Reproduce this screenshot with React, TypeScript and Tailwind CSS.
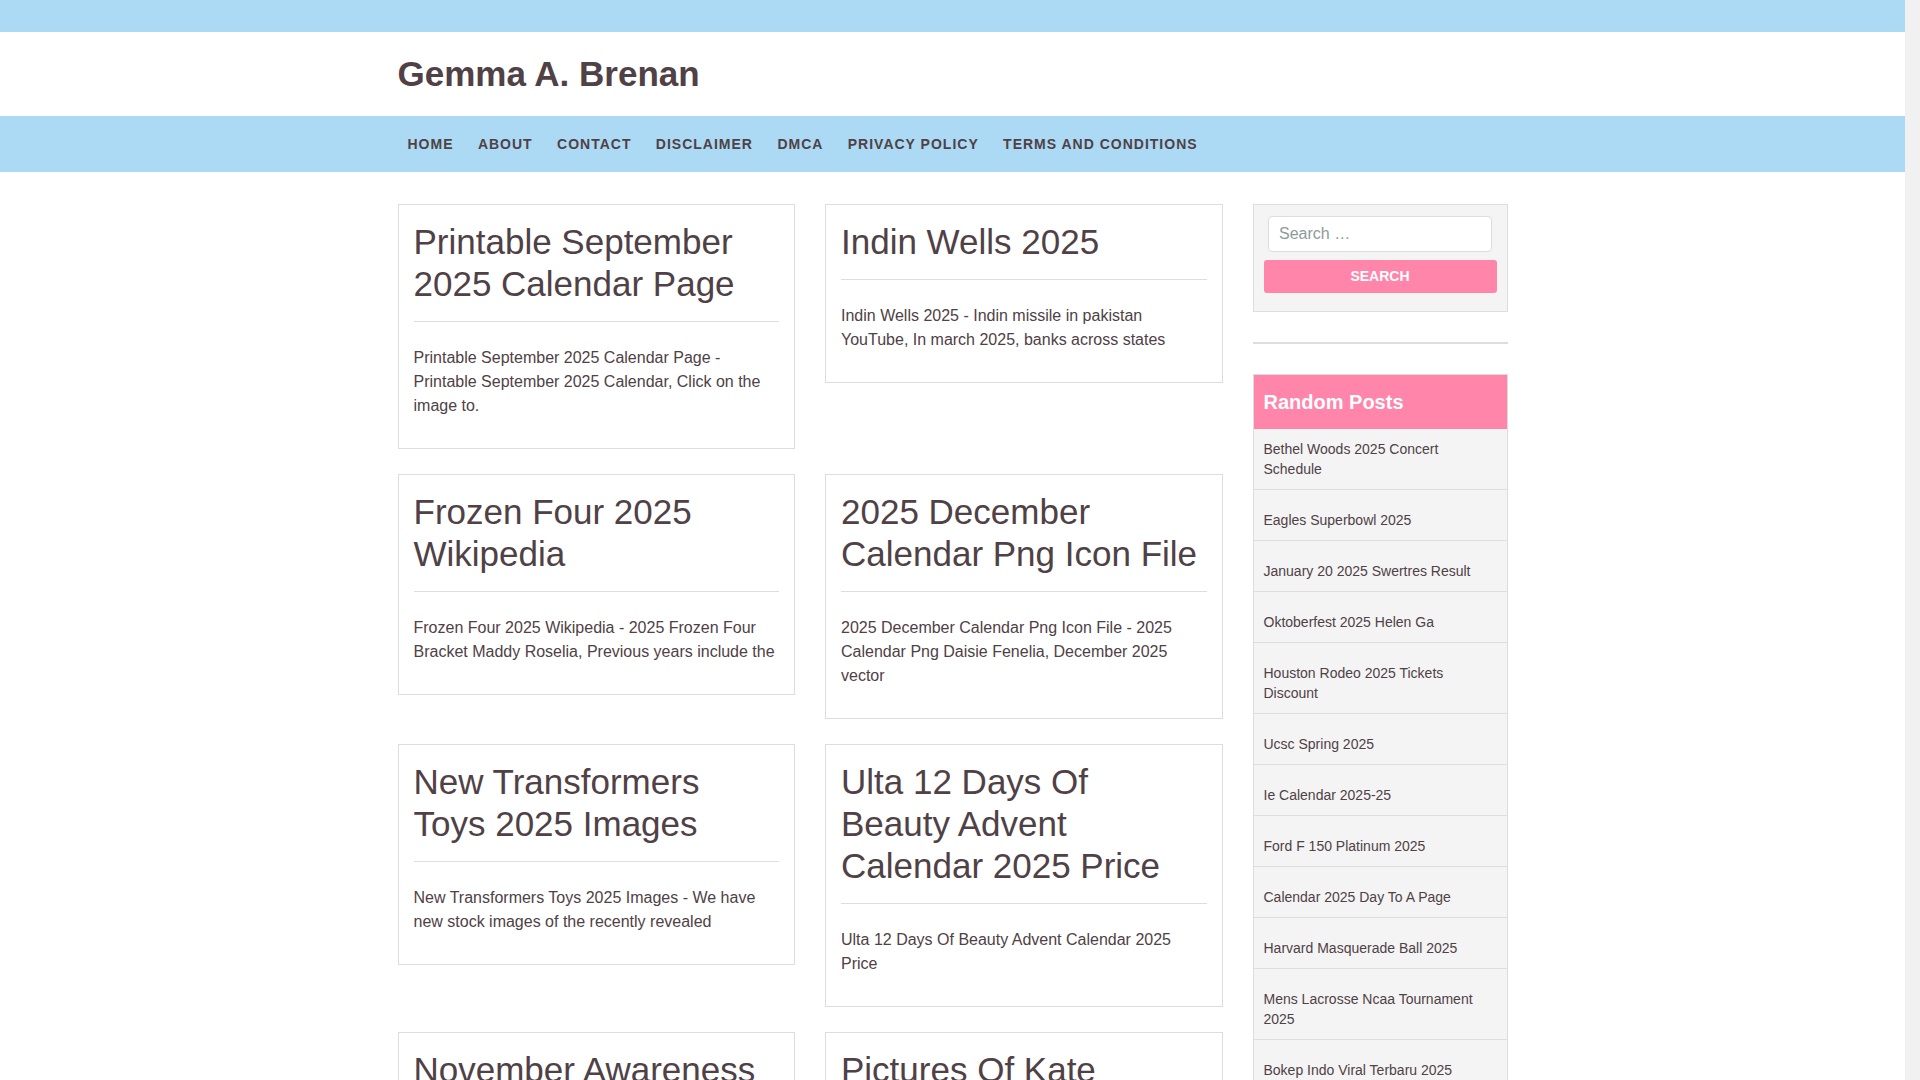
import React from "react";

interface Post {
  title: string;
  excerpt: string;
}

const posts: Post[] = [
  {
    title: "Printable September 2025 Calendar Page",
    excerpt:
      "Printable September 2025 Calendar Page - Printable September 2025 Calendar, Click on the image to.",
  },
  {
    title: "Indin Wells 2025",
    excerpt: "Indin Wells 2025 - Indin missile in pakistan YouTube, In march 2025, banks across states",
  },
  {
    title: "Frozen Four 2025 Wikipedia",
    excerpt:
      "Frozen Four 2025 Wikipedia - 2025 Frozen Four Bracket Maddy Roselia, Previous years include the",
  },
  {
    title: "2025 December Calendar Png Icon File",
    excerpt:
      "2025 December Calendar Png Icon File - 2025 Calendar Png Daisie Fenelia, December 2025 vector",
  },
  {
    title: "New Transformers Toys 2025 Images",
    excerpt: "New Transformers Toys 2025 Images - We have new stock images of the recently revealed",
  },
  {
    title: "Ulta 12 Days Of Beauty Advent Calendar 2025 Price",
    excerpt: "Ulta 12 Days Of Beauty Advent Calendar 2025 Price",
  },
  {
    title: "November Awareness Months 2025",
    excerpt: "November Awareness Months 2025 - Here is the full list of national awareness days in november",
  },
  {
    title: "Pictures Of Kate Middleton 2025",
    excerpt: "Pictures Of Kate Middleton 2025 - The princess of wales stepped out for the new year",
  },
];

const randomPosts = [
  "Bethel Woods 2025 Concert Schedule",
  "Eagles Superbowl 2025",
  "January 20 2025 Swertres Result",
  "Oktoberfest 2025 Helen Ga",
  "Houston Rodeo 2025 Tickets Discount",
  "Ucsc Spring 2025",
  "Ie Calendar 2025-25",
  "Ford F 150 Platinum 2025",
  "Calendar 2025 Day To A Page",
  "Harvard Masquerade Ball 2025",
  "Mens Lacrosse Ncaa Tournament 2025",
  "Bokep Indo Viral Terbaru 2025",
  "Nfl Draft 2025 Mock Draft",
  "Easter Sunday 2025 Date",
];

const navLinks = ["Home", "About", "Contact", "Disclaimer", "DMCA", "Privacy Policy", "Terms and Conditions"];

const PostCard: React.FC<{ post: Post }> = ({ post }) => (
  <article className="border border-[#dddddd] bg-white px-[15px] pt-4 pb-[15px]">
    <h2 className="text-[35px] leading-[42px] font-normal mb-4">
      <a href="#">{post.title}</a>
    </h2>
    <hr className="border-0 border-t border-[#dddddd] mb-6" />
    <p className="text-[16px] leading-6 mb-[15px]">{post.excerpt}</p>
  </article>
);

export default function App() {
  return (
    // right gutter stands in for the browser scrollbar of the original page
    <div className="h-screen overflow-y-scroll pr-[15px] bg-[#f1f1f1] text-[#4f4146] font-['Liberation_Sans',Arial,sans-serif]">
      <div className="bg-white min-h-full">
        <div className="h-8 bg-[#acd9f3]" />

        <header className="h-[84px]">
          <div className="w-[1110px] mx-auto h-full flex items-center">
            <h1 className="text-[35px] leading-none font-bold -mt-[2px]">
              <a href="#">Gemma A. Brenan</a>
            </h1>
          </div>
        </header>

        <nav className="h-14 bg-[#acd9f3]">
          <div className="w-[1110px] mx-auto h-full flex items-center">
            <ul className="flex gap-[4.4px]">
              {navLinks.map((link) => (
                <li key={link}>
                  <a href="#" className="px-[10px] text-[14px] font-bold uppercase tracking-[1px]">
                    {link}
                  </a>
                </li>
              ))}
            </ul>
          </div>
        </nav>

        <main className="w-[1110px] mx-auto mt-8 flex items-start gap-[30px] pb-10">
          <div className="w-[825px] grid grid-cols-2 gap-x-[30px] gap-y-[25px] items-start">
            {posts.map((post) => (
              <PostCard key={post.title} post={post} />
            ))}
          </div>

          <aside className="w-[255px]">
            <div className="border border-[#dddddd] bg-[#f4f4f4] px-[10px] pt-[11px] pb-[18px]">
              <input
                type="search"
                placeholder="Search …"
                className="block w-[224px] h-9 mx-auto bg-white border border-[#dddddd] rounded-[4px] px-[10px] text-[16px] placeholder:text-[#8e9a9a] outline-none"
              />
              <button className="mt-2 w-full h-[33px] rounded-[3px] bg-[#ff85ab] text-white text-[14px] font-bold uppercase">
                Search
              </button>
            </div>

            <hr className="my-[30px] border-0 border-t-2 border-[#dddddd]" />

            <div className="border border-[#dddddd] bg-[#f4f4f4]">
              <h3 className="h-[54px] flex items-center px-[10px] bg-[#ff85ab] text-white text-[20px] font-bold">
                Random Posts
              </h3>
              <ul>
                {randomPosts.map((title, i) => (
                  <li
                    key={title}
                    className={`px-[10px] pb-[10px] border-b border-[#dddddd] text-[14px] leading-5 ${
                      i === 0 ? "pt-[10px]" : "pt-5"
                    }`}
                  >
                    <a href="#">{title}</a>
                  </li>
                ))}
              </ul>
            </div>
          </aside>
        </main>
      </div>
    </div>
  );
}
